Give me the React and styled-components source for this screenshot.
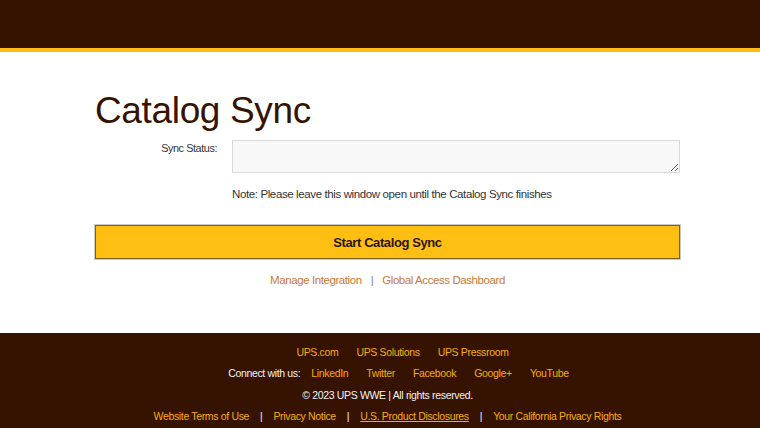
import React from "react";
import styled, { createGlobalStyle } from "styled-components";

const Global = createGlobalStyle`
  html, body { margin: 0; padding: 0; background: #fff; overflow-x: hidden; }
  body { font-family: "Liberation Sans", Arial, sans-serif; }
`;

const BROWN = "#361300";

const Header = styled.header`
  height: 48px;
  background: ${BROWN};
  border-bottom: 4px solid #fdbd10;
  border-image: linear-gradient(#e08a00 0 25%, #fdbd10 25% 100%) 1;
`;

const Main = styled.main`
  padding: 1px 0 0 15px;
`;

const Container = styled.div`
  width: 585px;
  margin: 0 auto;
`;

const Title = styled.h1`
  margin: 37px 0 0;
  font-size: 37px;
  line-height: 42px;
  font-weight: 400;
  letter-spacing: -0.35px;
  color: ${BROWN};
`;

const FormRow = styled.div`
  display: grid;
  grid-template-columns: 122px 448px;
  column-gap: 15px;
  margin-top: 8px;
`;

const Label = styled.label`
  text-align: right;
  font-size: 10.8px;
  line-height: 12px;
  letter-spacing: -0.4px;
  color: #333;
  padding-top: 2px;
`;

const StatusBox = styled.textarea`
  box-sizing: border-box;
  width: 448px;
  height: 33px;
  margin: 0;
  border: 1px solid #d9d9d9;
  background: #f8f8f8;
  display: block;
`;

const Note = styled.p`
  margin: 15px 0 0 137px;
  font-size: 11.5px;
  line-height: 13px;
  letter-spacing: -0.38px;
  color: #333;
`;

const SyncButton = styled.button`
  box-sizing: border-box;
  display: block;
  width: 585px;
  height: 34px;
  margin-top: 24px;
  background: #ffbe12;
  border: 1px solid #7a6320;
  box-shadow: 0 0 0 1px #c9c9c9;
  font-family: "Liberation Sans", Arial, sans-serif;
  font-size: 13px;
  font-weight: 700;
  letter-spacing: -0.4px;
  color: #2a1606;
  cursor: pointer;
`;

const LinkRow = styled.nav`
  margin-top: 15px;
  display: flex;
  justify-content: center;
  align-items: center;
  font-size: 11.5px;
  line-height: 13px;
  letter-spacing: -0.42px;
`;

const PageLink = styled.a`
  color: #c8793a;
  text-decoration: none;
`;

const Pipe = styled.span`
  color: ${(p) => p.$color || "#7d86a3"};
  padding: 0 ${(p) => p.$pad || 9}px;
`;

const Footer = styled.footer`
  margin-top: 46px;
  background: ${BROWN};
  padding: 8px 0 20px 15px;
  font-size: 10.5px;
  letter-spacing: -0.34px;
`;

const FooterRow = styled.div`
  display: flex;
  justify-content: center;
  align-items: center;
  height: 21.5px;
  padding-left: ${(p) => p.$shift || 0}px;
  gap: ${(p) => p.$gap || 0}px;
  color: #f2f2f2;
`;

const FooterLink = styled.a`
  color: #f5ad00;
  text-decoration: ${(p) => (p.$underline ? "underline" : "none")};
`;

const ConnectText = styled.span`
  color: #f2f2f2;
  margin-right: -7px;
`;

export default function App() {
  return (
    <>
      <Global />
      <Header />
      <Main>
        <Container>
          <Title>Catalog Sync</Title>
          <FormRow>
            <Label>Sync Status:</Label>
            <StatusBox readOnly />
          </FormRow>
          <Note>Note: Please leave this window open until the Catalog Sync finishes</Note>
          <SyncButton>Start Catalog Sync</SyncButton>
          <LinkRow>
            <PageLink href="#">Manage Integration</PageLink>
            <Pipe>|</Pipe>
            <PageLink href="#">Global Access Dashboard</PageLink>
          </LinkRow>
        </Container>
      </Main>
      <Footer>
        <FooterRow $gap={18} $shift={30}>
          <FooterLink href="#">UPS.com</FooterLink>
          <FooterLink href="#">UPS Solutions</FooterLink>
          <FooterLink href="#">UPS Pressroom</FooterLink>
        </FooterRow>
        <FooterRow $gap={18} $shift={22}>
          <ConnectText>Connect with us:</ConnectText>
          <FooterLink href="#">LinkedIn</FooterLink>
          <FooterLink href="#">Twitter</FooterLink>
          <FooterLink href="#">Facebook</FooterLink>
          <FooterLink href="#">Google+</FooterLink>
          <FooterLink href="#">YouTube</FooterLink>
        </FooterRow>
        <FooterRow>© 2023 UPS WWE | All rights reserved.</FooterRow>
        <FooterRow>
          <FooterLink href="#">Website Terms of Use</FooterLink>
          <Pipe $color="#f2f2f2" $pad={11}>|</Pipe>
          <FooterLink href="#">Privacy Notice</FooterLink>
          <Pipe $color="#f2f2f2" $pad={11}>|</Pipe>
          <FooterLink href="#" $underline>U.S. Product Disclosures</FooterLink>
          <Pipe $color="#f2f2f2" $pad={11}>|</Pipe>
          <FooterLink href="#">Your California Privacy Rights</FooterLink>
        </FooterRow>
      </Footer>
    </>
  );
}
